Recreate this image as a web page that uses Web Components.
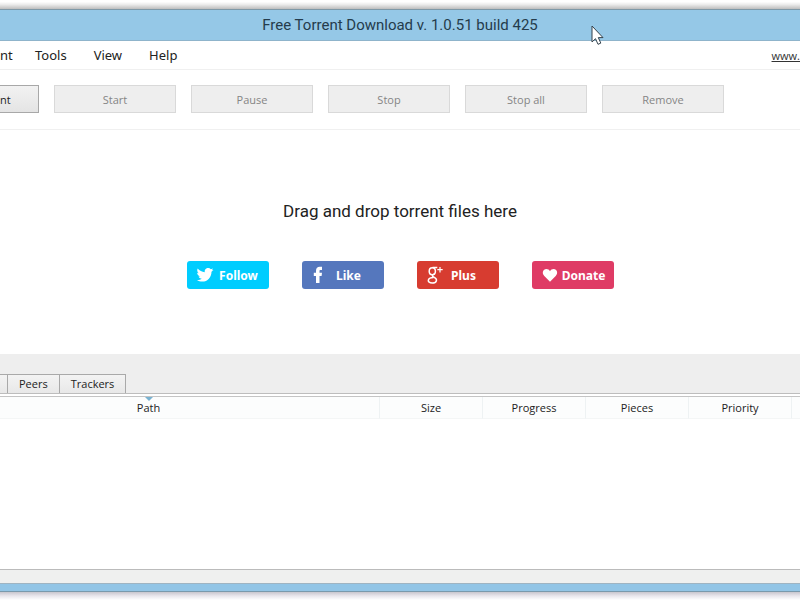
<!DOCTYPE html>
<html lang="en">
<head>
<meta charset="utf-8">
<title>Free Torrent Download</title>
<style>
html, body { height: 100%; }
body {
    margin: 0;
    background: #fff;
    color: #222;
    font-family: "Open Sans", "Noto Sans", sans-serif;
    font-size: 11px;
}
</style>
</head>
<body>
<app-window>
    <title-bar slot="title">Free Torrent Download v. 1.0.51 build 425</title-bar>
    <menu-bar>
        <menu-item edge>nt</menu-item>
        <menu-item>Tools</menu-item>
        <menu-item>View</menu-item>
        <menu-item>Help</menu-item>
        <site-link slot="link">www.</site-link>
    </menu-bar>
    <tool-bar>
        <tool-button edge>nt</tool-button>
        <tool-button disabled>Start</tool-button>
        <tool-button disabled>Pause</tool-button>
        <tool-button disabled>Stop</tool-button>
        <tool-button disabled>Stop all</tool-button>
        <tool-button disabled>Remove</tool-button>
    </tool-bar>
    <drop-zone>
        Drag and drop torrent files here
        <social-button slot="social" icon="twitter" color="#00cdff">Follow</social-button>
        <social-button slot="social" icon="facebook" color="#5577bd" narrow>Like</social-button>
        <social-button slot="social" icon="google" color="#d73c30" narrow>Plus</social-button>
        <social-button slot="social" icon="heart" color="#df3b65">Donate</social-button>
    </drop-zone>
    <tab-strip>
        <tab-button edge></tab-button>
        <tab-button>Peers</tab-button>
        <tab-button>Trackers</tab-button>
    </tab-strip>
    <file-table></file-table>
    <status-bar></status-bar>
</app-window>
<mouse-pointer></mouse-pointer>

<script>
function define(name, html, setup)
{
    const template=document.createElement('template')
    template.innerHTML=html
    window.customElements.define(name, class extends HTMLElement
    {
        constructor()
        {
            super()
            this.attachShadow({ mode: 'open' });
            this.shadowRoot.appendChild(template.content.cloneNode(true));
        }

        connectedCallback(){
            if(setup) setup(this, this.shadowRoot)
        }
    });
}

define('app-window', `
<style>
:host{
    display: flex;
    flex-direction: column;
    min-height: 100vh;
    overflow: hidden;
}
.shade-top{
    height: 9px;
    background: linear-gradient(#fff 20%, #ececec 50%, #bdbdbd);
}
.frame-bottom{
    height: 7px;
    background: #92c5e6;
    border-top: 1px solid #9fb4c2;
    border-bottom: 1px solid #7999ac;
}
.shade-bottom{
    height: 8px;
    background: linear-gradient(#c8c6ce, #e9e7ed 50%, #fff);
}
</style>
<div class="shade-top"></div>
<slot name="title"></slot>
<slot></slot>
<div class="frame-bottom"></div>
<div class="shade-bottom"></div>`)

define('title-bar', `
<style>
:host{
    display: block;
    border-top: 1px solid #7e99a8;
    border-bottom: 1px solid #8fb4cb;
    background: #95c8e7;
    color: #253c4c;
    font-family: Roboto, "Open Sans", sans-serif;
    font-size: 15px;
    line-height: 30px;
    text-align: center;
}
</style>
<slot></slot>`)

define('menu-bar', `
<style>
:host{
    display: flex;
    justify-content: space-between;
    align-items: center;
    height: 28px;
    border-bottom: 1px solid #f0f0f0;
}
nav{
    display: flex;
    gap: 27px;
}
</style>
<nav><slot></slot></nav>
<slot name="link"></slot>`)

define('menu-item', `
<style>
:host{ display: block; }
:host([edge]){ width: 8px; }
button{
    display: block;
    border: 0;
    padding: 0;
    background: none;
    color: #222;
    font: 13px/20px "Noto Sans", sans-serif;
}
</style>
<button type="button"><slot></slot></button>`)

define('site-link', `
<style>
:host{ display: block; }
a{
    color: #333;
    font-size: 11px;
}
</style>
<a href="#"><slot></slot></a>`)

define('tool-bar', `
<style>
:host{
    display: flex;
    gap: 15px;
    padding: 15px 0 16px;
    border-bottom: 1px solid #f0f0f0;
}
</style>
<slot></slot>`)

define('tool-button', `
<style>
:host{
    display: block;
    width: 122px;
}
:host([edge]){ width: 39px; }
button{
    box-sizing: border-box;
    width: 100%;
    height: 28px;
    border: 1px solid #a8a8a8;
    padding: 0;
    background: linear-gradient(#f2f2f2, #e4e4e4);
    color: #222;
    font: 11px "Open Sans", "Noto Sans", sans-serif;
}
button:disabled{
    border-color: #d9d9d9;
    background: #eee;
    color: #858585;
}
:host([edge]) button{
    border-left: 0;
    text-align: left;
}
</style>
<button type="button"><slot></slot></button>`, (el, root) => {
    root.querySelector('button').disabled=el.hasAttribute('disabled')
})

define('drop-zone', `
<style>
:host{
    display: flex;
    flex-direction: column;
    align-items: center;
    gap: 38px;
    padding: 69px 0 65px;
}
p{
    margin: 0;
    font-family: Roboto, "Open Sans", sans-serif;
    font-size: 17px;
    line-height: 24px;
}
.social{
    display: flex;
    gap: 33px;
}
</style>
<p><slot></slot></p>
<div class="social"><slot name="social"></slot></div>`)

const icons={
    twitter: '<path d="M17.500 3.900l-2 1.800C15.500 11.200 11.600 15.600 6.300 15.600 4.300 15.600 2.500 15.100 1 14.100c1.900.1 3.500-.4 4.800-1.400-1.600-.1-2.700-1-3.200-2.300h1.500C2.300 9.900 1.200 8.500 1.200 6.800l1.500.4C1.200 6.100.8 4.200 1.700 2.600c1.800 2.200 4.300 3.500 7.100 3.700C8.300 4 10 2.100 12.300 2.100c1 0 1.900.4 2.500 1.100L17.100 2.400 15.900 4.200z"/>',
    facebook: '<path d="M5 17V10H2.800V6.800H5V4.700C5 2 6.500.8 8.700.8H11V4H9.500C8.700 4 8.500 4.400 8.500 5v1.800H11L10.600 10H8.500v7z"/>',
    google: '<g fill="none" stroke="#fff" stroke-width="1.500"><ellipse cx="6.300" cy="5.200" rx="3.100" ry="3.500"/><path d="M6.500 1.600h4.800M8.500 8C5.500 9.300 5.700 10 8.300 11.300c3.700 2 2.400 5.700-2.100 5.700C.8 17 .8 11.700 7.500 11.500"/><path d="M14 1v5.400M11.300 3.700h5.400" stroke-width="1.200"/></g>',
    heart: '<path d="M9 15.800L3.300 10C.5 7 2 3 5.300 3 7 3 8.200 3.700 9 5.200 9.800 3.700 11 3 12.700 3 16 3 17.500 7 14.700 10z"/>'
}

define('social-button', `
<style>
:host{ display: block; }
button{
    display: flex;
    align-items: center;
    width: 82px;
    height: 28px;
    border: 0;
    border-radius: 3px;
    padding: 0 5px 0 9px;
    color: #fff;
    font: bold 12px "Noto Sans", sans-serif;
}
svg{
    flex: none;
    width: 18px;
    height: 18px;
    fill: #fff;
}
:host([narrow]) svg{ margin-right: -10px; }
span{
    flex: 1;
    text-align: center;
    white-space: nowrap;
}
</style>
<button type="button"><svg viewBox="0 0 18 18"></svg><span><slot></slot></span></button>`, (el, root) => {
    root.querySelector('svg').innerHTML=icons[el.getAttribute('icon')]
    root.querySelector('button').style.background=el.getAttribute('color')
})

define('tab-strip', `
<style>
:host{
    display: flex;
    padding-top: 20px;
    border-bottom: 1px solid #bdbdbd;
    background: #eee;
}
</style>
<slot></slot>`)

define('tab-button', `
<style>
:host{ display: block; }
button{
    display: block;
    height: 19px;
    border: 1px solid #a9a9a9;
    border-bottom: 0;
    border-left-width: 0;
    padding: 0 11px;
    background: linear-gradient(#f3f3f3, #e8e8e8);
    color: #222;
    font: 11px/18px "Open Sans", "Noto Sans", sans-serif;
}
:host([edge]) button{
    width: 8px;
    padding: 0;
}
</style>
<button type="button"><slot></slot></button>`, (el, root) => {
    if(el.hasAttribute('edge')) root.querySelector('button').setAttribute('aria-label', 'Files')
})

define('file-table', `
<style>
:host{
    display: block;
    flex: 1;
    margin-top: 2px;
    border-top: 1px solid #c4c4c4;
    border-bottom: 1px solid #bbb;
}
table{
    width: 100%;
    table-layout: fixed;
    border-collapse: separate;
    border-spacing: 0;
}
th{
    box-sizing: border-box;
    width: 103px;
    height: 22px;
    border-right: 1px solid #eef2f3;
    border-bottom: 1px solid #f4f6f6;
    padding: 0;
    background: #fcfdfd;
    font-weight: normal;
    line-height: 20px;
}
.path{
    width: auto;
    padding-right: 82px;
}
.path span{
    position: relative;
}
.path svg{
    position: absolute;
    left: 50%;
    top: -3px;
    width: 10px;
    height: 4px;
    margin-left: -5px;
}
.rest{
    width: 8px;
    border-right: 0;
}
</style>
<table>
    <thead>
        <tr>
            <th class="path"><span>Path<svg viewBox="0 0 10 4"><path d="M1 0h8L5 4z" fill="#78b2d1"/></svg></span></th>
            <th>Size</th>
            <th>Progress</th>
            <th>Pieces</th>
            <th>Priority</th>
            <th class="rest"></th>
        </tr>
    </thead>
    <tbody></tbody>
</table>`)

define('status-bar', `
<style>
:host{
    display: block;
    height: 13px;
    background: #eff0ef;
}
</style>`)

define('mouse-pointer', `
<style>
:host{
    position: absolute;
    left: 591px;
    top: 25px;
    pointer-events: none;
}
svg{
    display: block;
    width: 14px;
    height: 21px;
}
</style>
<svg viewBox="0 0 14 21"><path d="M1 1v16l3.500-3.300L7 19.300l2.800-1.200-2.500-5.500H12z" fill="#fff" stroke="#34424c" stroke-width="1"/></svg>`)
</script>
</body>
</html>
